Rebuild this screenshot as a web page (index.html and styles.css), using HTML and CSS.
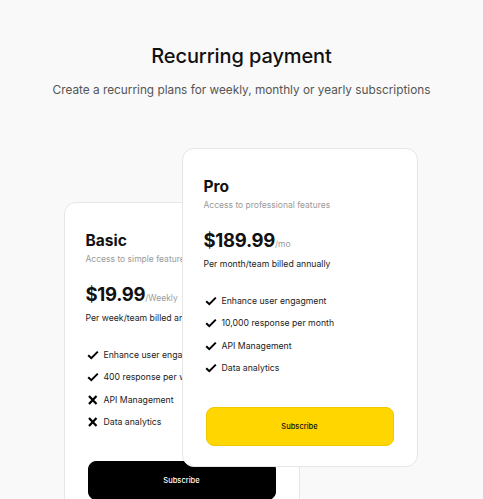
FILE: index.html
```html
<!DOCTYPE html>
<html>
<head>
<meta charset="utf-8">
<link rel="stylesheet" href="styles.css">
</head>
<body>
<div class="page">
  <h1 class="title">Recurring payment</h1>
  <p class="subtitle">Create a recurring plans for weekly, monthly or yearly subscriptions</p>
  <div class="plans">
    <div class="card basic">
      <h2 class="plan-name">Basic</h2>
      <p class="plan-desc">Access to simple features</p>
      <div class="price"><span class="amount">$19.99</span><span class="period">/Weekly</span></div>
      <p class="billing">Per week/team billed annually</p>
      <ul class="features">
        <li><svg class="icon" viewBox="0 0 12 10"><path d="M1.2 5.2 L4.3 8.2 L10.8 1.6" fill="none" stroke="#000" stroke-width="2"/></svg>Enhance user engagment</li>
        <li><svg class="icon" viewBox="0 0 12 10"><path d="M1.2 5.2 L4.3 8.2 L10.8 1.6" fill="none" stroke="#000" stroke-width="2"/></svg>400 response per week</li>
        <li><svg class="icon" viewBox="0 0 12 10"><path d="M2 1 L9.5 9 M9.5 1 L2 9" fill="none" stroke="#000" stroke-width="2.2"/></svg>API Management</li>
        <li><svg class="icon" viewBox="0 0 12 10"><path d="M2 1 L9.5 9 M9.5 1 L2 9" fill="none" stroke="#000" stroke-width="2.2"/></svg>Data analytics</li>
      </ul>
      <button class="btn btn-dark">Subscribe</button>
    </div>
    <div class="card pro">
      <h2 class="plan-name">Pro</h2>
      <p class="plan-desc">Access to professional features</p>
      <div class="price"><span class="amount">$189.99</span><span class="period">/mo</span></div>
      <p class="billing">Per month/team billed annually</p>
      <ul class="features">
        <li><svg class="icon" viewBox="0 0 12 10"><path d="M1.2 5.2 L4.3 8.2 L10.8 1.6" fill="none" stroke="#000" stroke-width="2"/></svg>Enhance user engagment</li>
        <li><svg class="icon" viewBox="0 0 12 10"><path d="M1.2 5.2 L4.3 8.2 L10.8 1.6" fill="none" stroke="#000" stroke-width="2"/></svg>10,000 response per month</li>
        <li><svg class="icon" viewBox="0 0 12 10"><path d="M1.2 5.2 L4.3 8.2 L10.8 1.6" fill="none" stroke="#000" stroke-width="2"/></svg>API Management</li>
        <li><svg class="icon" viewBox="0 0 12 10"><path d="M1.2 5.2 L4.3 8.2 L10.8 1.6" fill="none" stroke="#000" stroke-width="2"/></svg>Data analytics</li>
      </ul>
      <button class="btn btn-yellow">Subscribe</button>
    </div>
  </div>
</div>
</body>
</html>
```
FILE: styles.css
```css
html, body {
  margin: 0;
  padding: 0;
  background: #f9f9f9;
  height: 100%;
  overflow: hidden;
}
body {
  font-family: Inter, "Liberation Sans", sans-serif;
  color: #111;
}
.page {
  padding-top: 44px;
  display: flex;
  flex-direction: column;
  align-items: center;
}
.title {
  margin: 0;
  font-size: 20px;
  line-height: 24px;
  font-weight: 500;
  letter-spacing: -0.1px;
}
.subtitle {
  margin: 14px 0 0;
  font-size: 11.8px;
  line-height: 16px;
  color: #555;
}
.plans {
  margin-top: 50px;
  margin-left: -2px;
  display: flex;
  align-items: flex-start;
}
.card {
  width: 236px;
  box-sizing: border-box;
  background: #fff;
  border: 1px solid #e6e6e6;
  border-radius: 12px;
  padding: 28px 21px 20px;
}
.basic {
  margin-top: 54px;
  height: 320px;
}
.pro {
  margin-left: -118px;
  position: relative;
}
.plan-name {
  margin: 0;
  font-size: 15.5px;
  line-height: 20px;
  font-weight: 700;
}
.plan-desc {
  margin: 2px 0 0;
  font-size: 8.5px;
  line-height: 12px;
  color: #9a9a9a;
}
.price {
  margin-top: 17px;
  display: flex;
  align-items: baseline;
  line-height: 24px;
}
.amount {
  font-size: 18.5px;
  font-weight: 700;
  letter-spacing: -0.3px;
}
.period {
  font-size: 8.5px;
  color: #9a9a9a;
}
.billing {
  margin: 2px 0 0;
  font-size: 8.7px;
  line-height: 12px;
  color: #222;
}
.features {
  list-style: none;
  margin: 23px 0 0;
  padding: 0 0 0 1px;
  display: flex;
  flex-direction: column;
  gap: 6.4px;
}
.features li {
  display: flex;
  align-items: center;
  height: 16px;
  font-size: 8.7px;
  color: #222;
  white-space: nowrap;
}
.icon {
  width: 12px;
  height: 10px;
  margin-right: 5px;
  flex: none;
}
.btn {
  display: block;
  margin: 31px 2px 0;
  width: calc(100% - 4px);
  height: 39px;
  border-radius: 8px;
  font-family: inherit;
  font-size: 7.5px;
  font-weight: 500;
  cursor: pointer;
}
.btn-yellow {
  background: #ffd600;
  border: 1px solid #f0c800;
  color: #111;
}
.btn-dark {
  background: #000;
  border: 1px solid #000;
  color: #fff;
}
```
